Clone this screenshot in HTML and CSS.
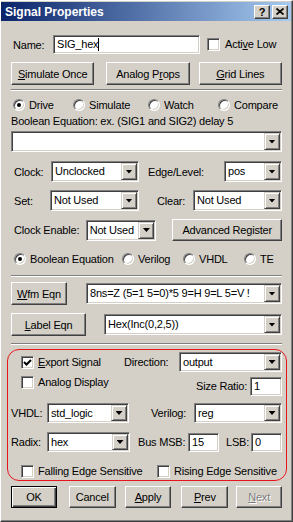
FILE: index.html
```html
<!DOCTYPE html>
<html lang="en">
<head>
    <meta charset="UTF-8">
    <title>Signal Properties</title>
    <link rel="stylesheet" href="styles.css">
</head>
<body>
<div class="window">
    <div class="titlebar">
        <span class="title">Signal Properties</span>
        <span class="tbtn help">?</span>
        <span class="tbtn close">
            <svg width="8" height="7" viewBox="0 0 8 7"><path d="M0.5 0.5 L7.5 6.5 M7.5 0.5 L0.5 6.5" stroke="#000" stroke-width="1.7" fill="none"/></svg>
        </span>
    </div>

    <div class="dlg">
        <div class="row name-row">
            <span class="name-lbl">Name:</span>
            <div class="edit name-edit">SIG_hex<span class="caret"></span></div>
            <span class="chk"></span>
            <span class="chk-text">Acti<u>v</u>e Low</span>
        </div>

        <div class="row btn-row">
            <div class="btn sim-btn"><u>S</u>imulate Once</div>
            <div class="btn analog-btn">Analog P<u>r</u>ops</div>
            <div class="btn grid-btn"><u>G</u>rid Lines</div>
        </div>

        <div class="sep sep-top"></div>

        <div class="row opt-row mode-row">
            <span class="opt drive-opt"><span class="radio on"></span>Drive</span>
            <span class="opt sim-opt"><span class="radio"></span>Simulate</span>
            <span class="opt watch-opt"><span class="radio"></span>Watch</span>
            <span class="opt"><span class="radio"></span>Compare</span>
        </div>

        <div class="bool-lbl">Boolean Equation: ex. (SIG1 and SIG2) delay 5</div>
        <div class="combo bool-combo"><span class="val"></span><span class="drop"></span></div>

        <div class="row reg-row clock-row">
            <span class="clock-lbl">Clock:</span>
            <div class="combo clock-combo"><span class="val">Unclocked</span><span class="drop"></span></div>
            <span class="edge-lbl">Edge/Level:</span>
            <div class="combo edge-combo"><span class="val">pos</span><span class="drop"></span></div>
        </div>

        <div class="row reg-row set-row">
            <span class="set-lbl">Set:</span>
            <div class="combo set-combo"><span class="val">Not Used</span><span class="drop"></span></div>
            <span class="clear-lbl">Clear:</span>
            <div class="combo clear-combo"><span class="val">Not Used</span><span class="drop"></span></div>
        </div>

        <div class="row ce-row">
            <span class="ce-lbl">Clock Enable:</span>
            <div class="combo ce-combo"><span class="val">Not Used</span><span class="drop"></span></div>
            <div class="btn adv-btn">Advanced Register</div>
        </div>

        <div class="row opt-row lang-row">
            <span class="opt bool-opt"><span class="radio on"></span>Boolean Equation</span>
            <span class="opt verilog-opt"><span class="radio"></span>Verilog</span>
            <span class="opt vhdl-opt"><span class="radio"></span>VHDL</span>
            <span class="opt"><span class="radio"></span>TE</span>
        </div>

        <div class="sep sep-mid"></div>

        <div class="row eqn-row wfm-row">
            <div class="btn wfm-btn"><u>W</u>fm Eqn</div>
            <div class="combo wfm-combo"><span class="val">8ns=Z (5=1 5=0)*5 9=H 9=L 5=V !</span><span class="drop"></span></div>
        </div>

        <div class="row eqn-row label-row">
            <div class="btn label-btn"><u>L</u>abel Eqn</div>
            <div class="combo label-combo"><span class="val">Hex(Inc(0,2,5))</span><span class="drop"></span></div>
        </div>

        <div class="sep sep-low"></div>

        <div class="export-box">
            <div class="row export-row">
                <span class="chk checked">
                    <svg width="9" height="9" viewBox="0 0 9 9"><path d="M1 4 L3.5 6.5 L8 2" stroke="#000" stroke-width="2" fill="none"/></svg>
                </span>
                <span class="chk-text"><u>E</u>xport Signal</span>
                <span class="dir-lbl">Direction:</span>
                <div class="combo box-combo dir-combo"><span class="val">output</span><span class="drop"></span></div>
            </div>

            <div class="row analog-row">
                <span class="chk"></span>
                <span class="chk-text">Analog Display</span>
                <span class="ratio-lbl">Size Ratio:</span>
                <div class="edit box-edit ratio-edit">1</div>
            </div>

            <div class="row vhdl-row">
                <span class="type-lbl">VHDL:</span>
                <div class="combo box-combo vhdl-combo"><span class="val">std_logic</span><span class="drop"></span></div>
                <span class="verilog-lbl">Verilog:</span>
                <div class="combo box-combo verilog-combo"><span class="val">reg</span><span class="drop"></span></div>
            </div>

            <div class="row radix-row">
                <span class="type-lbl">Radix:</span>
                <div class="combo box-combo radix-combo"><span class="val">hex</span><span class="drop"></span></div>
                <span class="msb-lbl">Bus MSB:</span>
                <div class="edit box-edit msb-edit">15</div>
                <span class="lsb-lbl">LSB:</span>
                <div class="edit box-edit lsb-edit">0</div>
            </div>

            <div class="row sens-row">
                <span class="chk"></span>
                <span class="chk-text falling-text">Falling Edge Sensitive</span>
                <span class="chk"></span>
                <span class="chk-text">Rising Edge Sensitive</span>
            </div>
        </div>

        <div class="row bottom-row">
            <div class="btn default ok-btn">OK</div>
            <div class="btn cancel-btn">Cancel</div>
            <div class="btn apply-btn"><u>A</u>pply</div>
            <div class="btn prev-btn"><u>P</u>rev</div>
            <div class="btn disabled next-btn"><u>N</u>ext</div>
        </div>
    </div>
</div>
</body>
</html>
```

FILE: styles.css
```css
body {
    margin: 0;
    background-color: #d4d0c8;
    font-family: 'Liberation Sans', Arial, sans-serif;
    font-size: 11px;
    letter-spacing: -0.2px;
    color: #000;
}
u {
    text-decoration: underline;
    text-underline-offset: 1px;
}
.window {
    width: 293px;
    height: 522px;
    box-sizing: border-box;
    background-color: #d4d0c8;
    border: 1px solid;
    border-color: #fff #404040 #404040 #fff;
    box-shadow: inset -1px -1px #808080;
    padding: 1px 1px 1px 0;
}
.titlebar {
    display: flex;
    align-items: center;
    height: 19px;
    padding: 0 3px 0 4px;
    background: linear-gradient(to right, #0a246a, #a6caf0);
}
.title {
    flex: 1;
    color: #fff;
    font-weight: bold;
    font-size: 12px;
    letter-spacing: 0;
}
.tbtn {
    width: 16px;
    height: 14px;
    box-sizing: border-box;
    display: flex;
    align-items: center;
    justify-content: center;
    background-color: #d4d0c8;
    border: 1px solid;
    border-color: #fff #404040 #404040 #fff;
    box-shadow: inset -1px -1px #808080;
    font-weight: bold;
    font-size: 11px;
}
.tbtn.close {
    margin-left: 2px;
}
.dlg {
    padding: 0 9px 0 10px;
}
.row {
    display: flex;
    align-items: center;
}

/* common controls */
.btn {
    height: 23px;
    box-sizing: border-box;
    display: flex;
    align-items: center;
    justify-content: center;
    border: 1px solid;
    border-color: #fff #404040 #404040 #fff;
    box-shadow: inset -1px -1px #808080;
    white-space: nowrap;
}
.btn.default {
    border-color: #000;
    box-shadow: inset 1px 1px #fff, inset -1px -1px #404040, inset -2px -2px #808080;
}
.btn.disabled {
    color: #808080;
    text-shadow: 1px 1px #fff;
}
.edit {
    height: 19px;
    box-sizing: border-box;
    background-color: #fff;
    border: 1px solid;
    border-color: #808080 #fff #fff #808080;
    box-shadow: inset 1px 1px #404040, inset -1px -1px #d4d0c8;
    padding: 0 3px;
    line-height: 17px;
    white-space: nowrap;
}
.caret {
    display: inline-block;
    width: 1px;
    height: 13px;
    background-color: #000;
    vertical-align: -3px;
}
.combo {
    display: flex;
    height: 21px;
    box-sizing: border-box;
    background-color: #fff;
    border: 1px solid;
    border-color: #808080 #fff #fff #808080;
    box-shadow: inset 1px 1px #404040, inset -1px -1px #d4d0c8;
    padding: 1px;
}
.combo .val {
    flex: 1;
    padding-left: 2px;
    line-height: 17px;
    overflow: hidden;
    white-space: nowrap;
}
.drop {
    width: 16px;
    flex: none;
    box-sizing: border-box;
    display: flex;
    align-items: center;
    justify-content: center;
    background-color: #d4d0c8;
    border: 1px solid;
    border-color: #d4d0c8 #404040 #404040 #d4d0c8;
    box-shadow: inset 1px 1px #fff, inset -1px -1px #808080;
}
.drop::before {
    content: "";
    width: 7px;
    height: 4px;
    background-color: #000;
    clip-path: polygon(0 0, 100% 0, 50% 100%);
}
.chk {
    width: 13px;
    height: 13px;
    flex: none;
    box-sizing: border-box;
    display: flex;
    align-items: center;
    justify-content: center;
    background-color: #fff;
    border: 1px solid;
    border-color: #808080 #fff #fff #808080;
    box-shadow: inset 1px 1px #404040, inset -1px -1px #d4d0c8;
}
.chk-text {
    margin-left: 4px;
    line-height: 13px;
    white-space: nowrap;
}
.radio {
    position: relative;
    width: 12px;
    height: 12px;
    flex: none;
    box-sizing: border-box;
    margin-right: 4px;
    border-radius: 50%;
    background-color: #fff;
    border: 1px solid;
    border-color: #808080 #fff #fff #808080;
    box-shadow: inset 1px 1px #404040, inset -1px -1px #d4d0c8;
}
.radio.on::after {
    content: "";
    position: absolute;
    left: 3px;
    top: 3px;
    width: 4px;
    height: 4px;
    border-radius: 50%;
    background-color: #000;
}
.opt {
    display: flex;
    align-items: center;
    white-space: nowrap;
}
.sep {
    height: 0;
    border-top: 1px solid #808080;
    border-bottom: 1px solid #fff;
}

/* name + action buttons */
.name-row {
    margin-top: 14px;
}
.name-lbl {
    margin-left: 2px;
    width: 40px;
}
.name-edit {
    width: 147px;
}
.name-row .chk {
    margin-left: 7px;
}
.name-row .chk-text {
    margin-left: 5px;
}
.btn-row {
    margin-top: 8px;
}
.btn-row .btn {
    width: 84px;
}
.analog-btn {
    margin-left: 12px;
}
.grid-btn {
    margin-left: 9px;
}
.sep-top {
    margin-top: 4px;
}

/* mode */
.opt-row {
    height: 13px;
}
.mode-row {
    margin-top: 7px;
}
.drive-opt {
    margin-left: 2px;
    width: 60px;
}
.sim-opt {
    width: 75px;
}
.watch-opt {
    width: 70px;
}
.bool-lbl {
    margin-top: 4px;
    line-height: 13px;
}
.bool-combo {
    margin-top: 3px;
}

/* register */
.clock-row {
    margin-top: 9px;
}
.set-row {
    margin-top: 8px;
}
.clock-lbl, .set-lbl, .ce-lbl {
    margin-left: 3px;
}
.clock-lbl {
    width: 37px;
}
.clock-combo {
    width: 88px;
}
.edge-lbl {
    margin-left: 9px;
    width: 76px;
}
.edge-combo {
    width: 58px;
}
.set-lbl {
    width: 36px;
}
.set-combo {
    width: 89px;
}
.clear-lbl {
    margin-left: 18px;
    width: 36px;
}
.clear-combo {
    width: 89px;
}
.ce-row {
    margin-top: 8px;
}
.ce-lbl {
    width: 72px;
}
.ce-combo {
    width: 71px;
}
.adv-btn {
    margin-left: 16px;
    width: 110px;
    height: 22px;
}
.lang-row {
    margin-top: 11px;
}
.bool-opt {
    margin-left: 3px;
    width: 108px;
}
.verilog-opt {
    width: 61px;
}
.vhdl-opt {
    width: 61px;
}
.sep-mid {
    margin-top: 10px;
}

/* equations */
.wfm-row {
    margin-top: 5px;
}
.label-row {
    margin-top: 8px;
}
.wfm-btn {
    width: 56px;
}
.wfm-combo {
    margin-left: 19px;
    width: 196px;
}
.label-btn {
    width: 75px;
}
.label-combo {
    margin-left: 18px;
    width: 178px;
}
.sep-low {
    margin-top: 7px;
}

/* export box */
.export-box {
    margin: 4px -5px 0 -4px;
    padding: 0 4px 2px 3px;
    border: 1px solid #e8141c;
    border-radius: 12px;
}
.box-combo {
    height: 20px;
}
.box-combo .val {
    line-height: 16px;
}
.box-edit {
    height: 19px;
}
.export-row {
    margin-top: 2px;
}
.export-row .chk, .analog-row .chk, .sens-row .chk:first-child {
    margin-left: 10px;
}
.dir-lbl {
    margin-left: auto;
    width: 55px;
}
.dir-combo {
    width: 103px;
}
.analog-row {
    margin-top: 4px;
    align-items: flex-start;
}
.ratio-lbl {
    margin-left: auto;
    margin-top: 4px;
    width: 54px;
}
.ratio-edit {
    margin-top: 1px;
    width: 32px;
}
.vhdl-row {
    margin-top: 7px;
}
.type-lbl {
    width: 36px;
}
.vhdl-combo {
    width: 82px;
}
.verilog-lbl {
    margin-left: auto;
    width: 43px;
}
.verilog-combo {
    width: 88px;
}
.radix-row {
    margin-top: 9px;
}
.radix-combo {
    width: 83px;
}
.msb-lbl {
    margin-left: 8px;
    width: 50px;
}
.msb-edit {
    width: 31px;
}
.lsb-lbl {
    margin-left: 7px;
    width: 25px;
}
.lsb-edit {
    width: 31px;
}
.sens-row {
    margin-top: 13px;
}
.falling-text {
    width: 119px;
}

/* bottom buttons */
.bottom-row {
    margin-top: 5px;
}
.bottom-row .btn {
    height: 22px;
}
.ok-btn {
    width: 46px;
}
.cancel-btn {
    margin-left: 12px;
    width: 47px;
}
.apply-btn {
    margin-left: 9px;
    width: 47px;
}
.prev-btn {
    margin-left: 10px;
    width: 47px;
}
.next-btn {
    margin-left: 8px;
    width: 46px;
}
```
